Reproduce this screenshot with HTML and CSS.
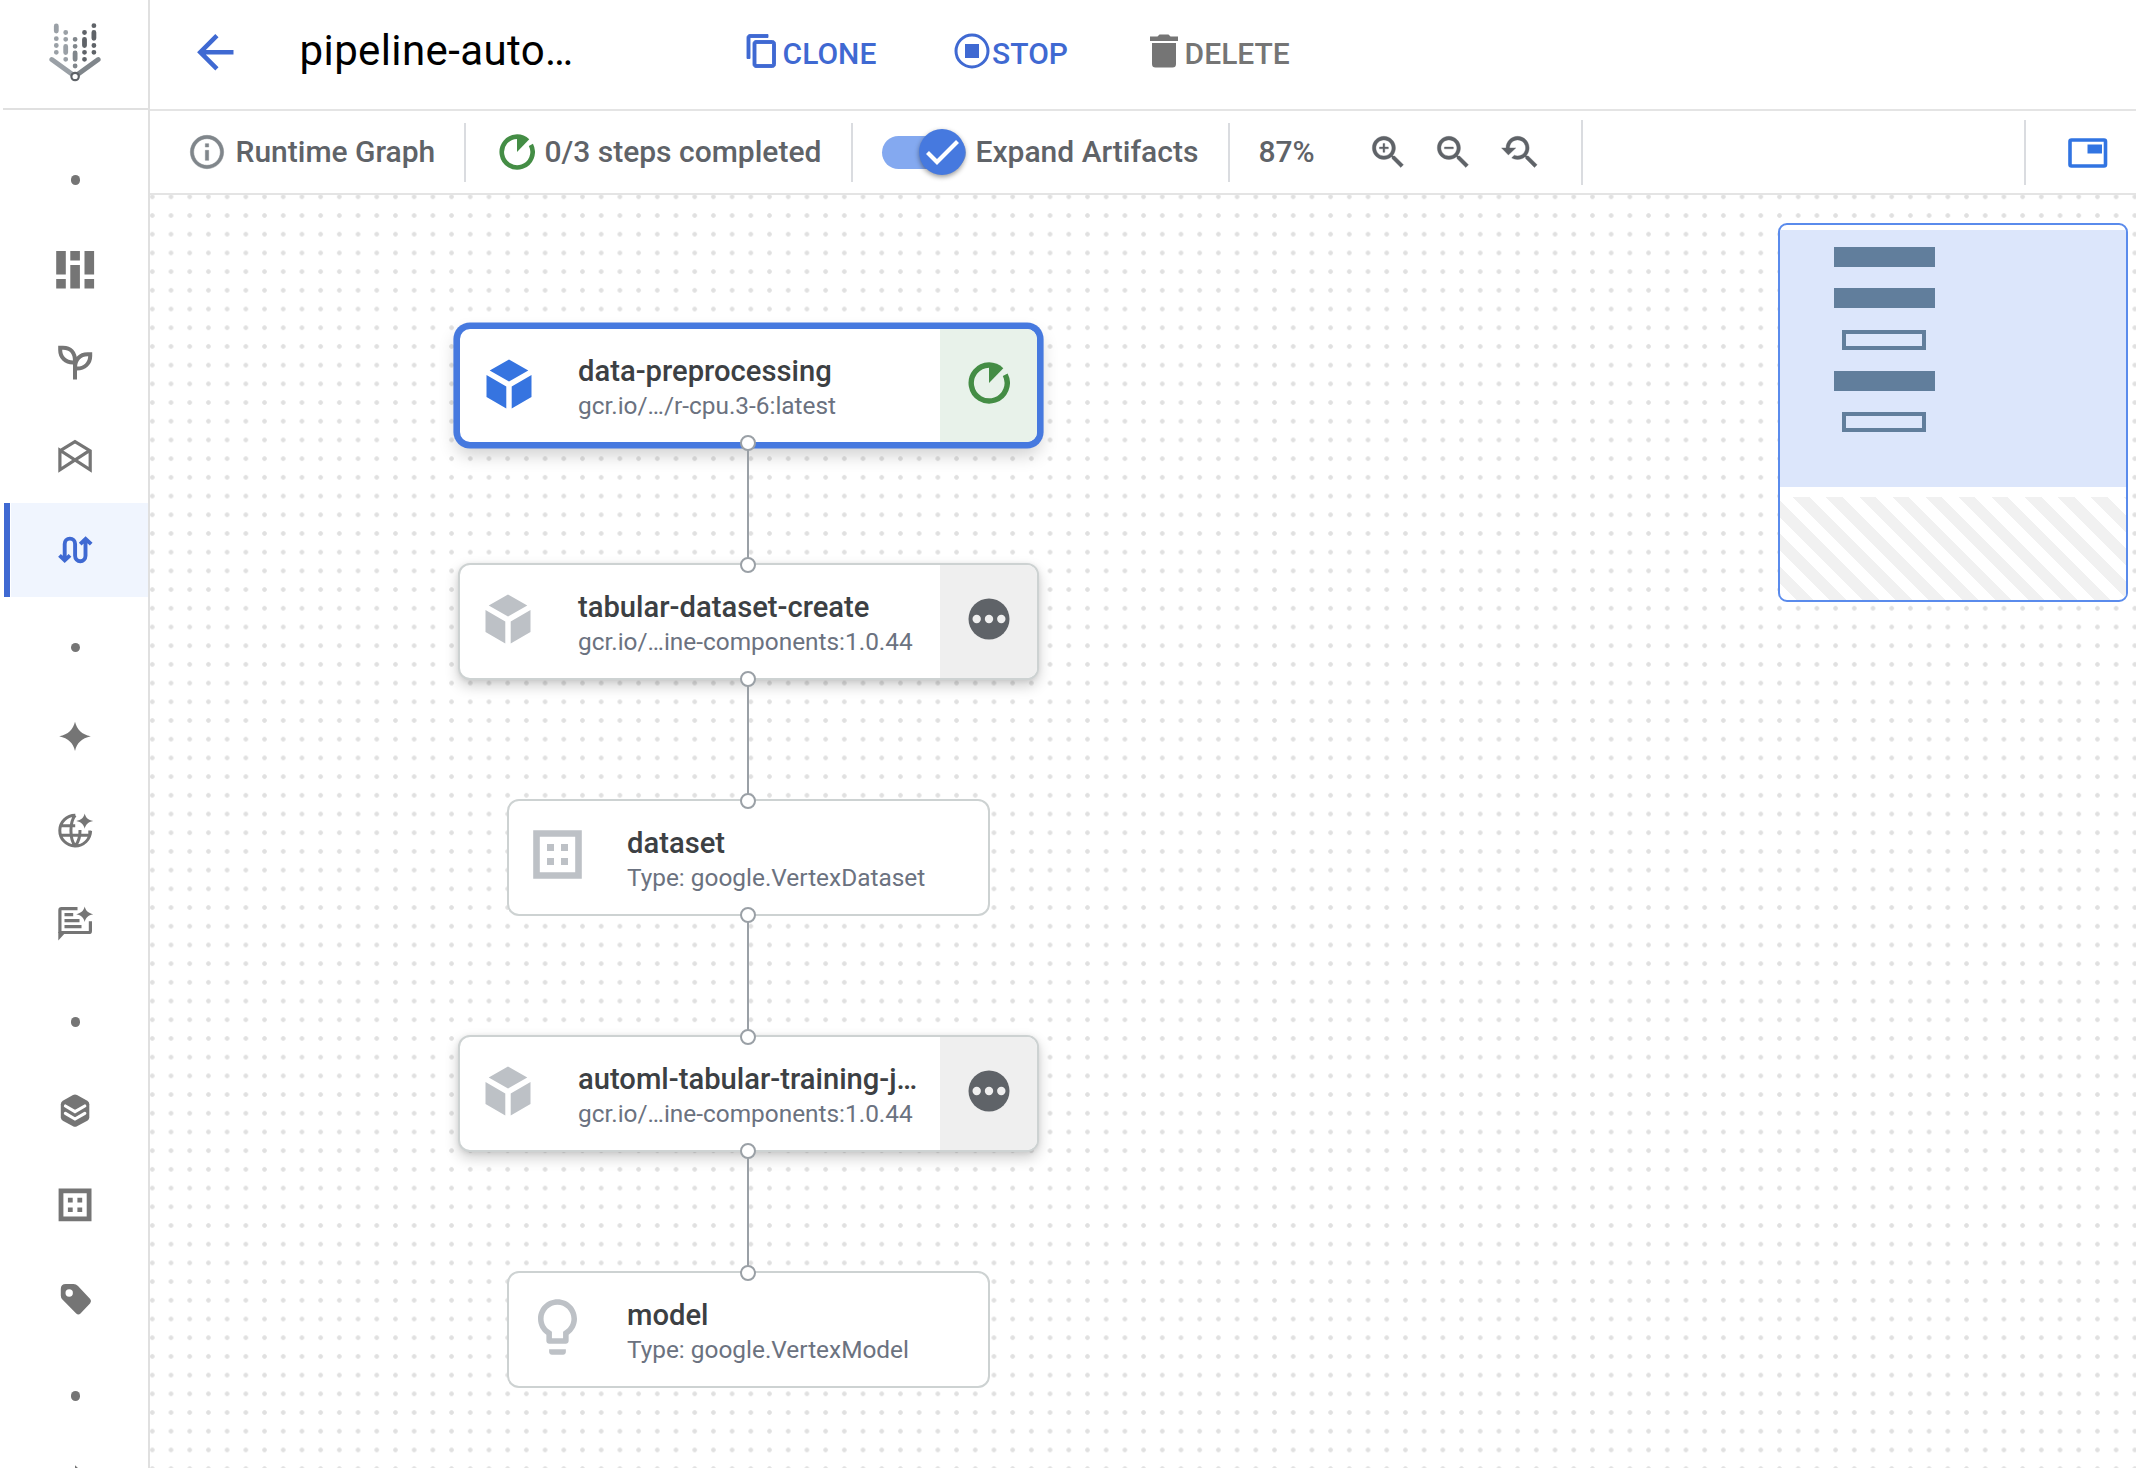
FILE: index.html
```html
<!DOCTYPE html>
<html lang="en">
<head>
<meta charset="utf-8">
<title>pipeline-auto…</title>
<link rel="stylesheet" href="styles.css">
</head>
<body>
<svg class="defs" width="0" height="0" aria-hidden="true">
  <symbol id="progress" viewBox="0 0 42 42"><path d="M21 21V.3A20.7 20.7 0 0 1 35.3 6.2Z" fill="currentColor"/><path d="M37.2 12.7A18 18 0 1 1 21 3" fill="none" stroke="currentColor" stroke-width="5.4"/></symbol>
  <symbol id="cube" viewBox="0 0 46 50"><path d="M23 .5 42.3 11.6 23 22.6 3.7 11.6ZM.5 16 20.3 27.5V49.5L.5 38ZM45.500 16V38L25.700 49.500V27.500Z" fill="currentColor"/></symbol>
  <symbol id="more" viewBox="0 0 42 42"><circle cx="21" cy="21" r="20.500" fill="#5f6368"/><g fill="#efefef"><circle cx="8.700" cy="21" r="4.200"/><circle cx="21" cy="21" r="4.200"/><circle cx="33.300" cy="21" r="4.200"/></g></symbol>
</svg>
<div class="app">
  <aside class="sidebar">
    <div class="logo">
      <svg width="52" height="64" viewBox="49 20 52 64" fill="none" stroke-linecap="round" stroke-width="4.800">
        <path d="M51.800 59.500 72.500 74.500" stroke="#9aa0a6"/>
        <path d="M98.200 59.500 77.500 74.500" stroke="#80868b"/>
        <path d="M56.300 26V31M56.300 38.700h.01M56.300 45.500h.01M56.300 52.300h.01M65.700 32.500h.01M65.700 39.300h.01M65.700 46.500V52.500M65.700 59.300h.01" stroke="#9aa0a6"/>
        <path d="M75.100 39.300h.01M75.100 46.300h.01M75.100 53V59.300M75.100 66h.01" stroke="#80868b"/>
        <path d="M84.500 32.500h.01M84.500 39.300V45.500M84.500 52.300h.01M84.500 59.300h.01M93.900 25.700h.01M93.900 32.500V38.300M93.900 45.500h.01M93.900 52.300h.01" stroke="#5f6368"/>
        <circle cx="75.100" cy="76.500" r="3.700" stroke="#5f6368" stroke-width="2.200" fill="#fff"/>
      </svg>
    </div>
    <nav class="nav">
      <div class="nav-item"><i class="dot"></i></div>
      <div class="nav-item"><svg viewBox="0 0 40 40" fill="currentColor"><path d="M1.200 1h9.600v23.500h-9.600zM1.200 29h9.600v9.500h-9.600zM15.300 1h9.600v9.500h-9.600zM15.300 15h9.600v23.500h-9.600zM29.500 1h9.600v23.500h-9.600zM29.500 29h9.600v9.500h-9.600z"/></svg></div>
      <div class="nav-item"><svg viewBox="0 0 40 40" fill="none" stroke="currentColor" stroke-width="4"><path d="M20 36.600V18C20 9.500 15.500 4.700 8 4.700H5.200V7C5.200 14.500 10.500 19.500 18 19.500H20M20 25C20 16.500 25 11.300 32.500 11.300H35.200V13C35.200 20.500 29.500 25.600 22 25.600H20"/></svg></div>
      <div class="nav-item"><svg viewBox="0 0 40 40" fill="none" stroke="currentColor" stroke-width="3.200"><path d="M4.900 13.800 20 4.600 35.200 13.800V32.800L4.900 13.200V32.800L35.200 13.200"/></svg></div>
      <div class="nav-item active"><svg viewBox="0 0 40 40" fill="none" stroke="currentColor" stroke-width="3.900"><path d="M9.700 30V14a5.200 5.400 0 0 1 10.400 0V25.800a5.200 5.400 0 0 0 10.400 0V9M4.500 25.300 9.700 30.400 15 25.300M25.200 14.200 30.600 8.900 36.200 14.200"/></svg></div>
      <div class="nav-item"><i class="dot"></i></div>
      <div class="nav-item"><svg viewBox="0 0 40 40" fill="currentColor"><path d="M20 4.800C22 12.500 26.500 17.500 35.800 19.300 26.500 21.500 22 26 20 34 18 26 13.500 21.500 4.200 19.300 13.500 17.500 18 12.500 20 4.800Z"/></svg></div>
      <div class="nav-item"><svg viewBox="0 0 40 40" fill="none" stroke="currentColor" stroke-width="3"><path d="M20.300 4.200A15.400 15.400 0 1 0 35.600 20M5 14.700H20.200M5 24.300H35M20.200 4.200C14.500 11 14.500 28 20.200 35M25 19C25.200 26 23.500 31 20.200 35M34.800 19.500V24.300"/><path d="M29.700 2.400C30.700 6.500 33 9 38.200 9.900 33 11 30.700 13.500 29.700 17.800 28.700 13.500 26.400 11 21.200 9.900 26.400 9 28.700 6.500 29.700 2.400Z" fill="currentColor" stroke="none"/></svg></div>
      <div class="nav-item"><svg viewBox="0 0 40 40" fill="none" stroke="currentColor" stroke-width="3.200"><path d="M22.500 4.700H6.500Q4.900 4.700 4.900 6.300V29M4.900 28.500H33.800Q35.400 28.500 35.400 26.900V17.300M9.500 10.700H18.200M9.500 16.600H24.500M9.500 22.600H26.500"/><path d="M3.300 28H11L3.300 36.500ZM29.700 2.600C30.700 6.700 33 9.200 38.200 10.300 33 11.400 30.700 13.900 29.700 18 28.700 13.900 26.400 11.400 21.200 10.300 26.400 9.200 28.700 6.700 29.700 2.600Z" fill="currentColor" stroke="none"/></svg></div>
      <div class="nav-item"><i class="dot"></i></div>
      <div class="nav-item"><svg viewBox="0 0 40 40"><path d="M18 4Q20 2.900 22 4L32.300 9.800Q34.300 11 34.300 13.200V26.500Q34.300 28.500 32.300 29.700L22 35.300Q20 36.300 18 35.300L7.800 29.700Q5.800 28.500 5.800 26.500V13.200Q5.800 11 7.800 9.800Z" fill="currentColor"/><path d="M10.400 15 20 20.700 29.800 15M10.400 22.300 20 28 29.800 22.300" fill="none" stroke="#fff" stroke-width="3.100" stroke-linecap="round"/></svg></div>
      <div class="nav-item"><svg viewBox="0 0 40 40"><path d="M6 5.900H34.100V33.800H6Z" fill="none" stroke="currentColor" stroke-width="4.800"/><path d="M12.900 12.800h4.800v4.700h-4.800zM22.400 12.800h4.800v4.700h-4.800zM12.900 22.400h4.800v4.700h-4.800zM22.400 22.400h4.800v4.700h-4.800z" fill="currentColor"/></svg></div>
      <div class="nav-item"><svg viewBox="0 0 40 40"><path d="M5.800 10Q5.800 5 10.800 5H18.500Q21 5 23 7L35.200 20Q37 22.300 35.200 24.300L25.500 34.500Q23.400 36.500 21.200 34.500L7.400 20.500Q5.800 19 5.800 16.500Z" fill="currentColor"/><circle cx="14.200" cy="14" r="3.700" fill="#fff"/></svg></div>
      <div class="nav-item"><i class="dot"></i></div>
      <div class="nav-item"><svg viewBox="0 0 40 40" fill="currentColor"><path d="M20-.8 23.500 2.500V5H20Z"/></svg></div>
    </nav>
  </aside>
  <main class="main">
    <header class="header">
      <svg class="back" viewBox="0 0 24 24" fill="currentColor"><path d="M20 11H7.830l5.590-5.590L12 4l-8 8 8 8 1.410-1.410L7.830 13H20v-2z"/></svg>
      <h1 class="title">pipeline-auto…</h1>
      <div class="action clone"><svg width="36" height="36" viewBox="0 0 24 24" fill="currentColor" stroke="currentColor" stroke-width=".6"><path d="M16 1H4c-1.100 0-2 .9-2 2v14h2V3h12V1zm3 4H8c-1.100 0-2 .9-2 2v14c0 1.100.9 2 2 2h11c1.100 0 2-.9 2-2V7c0-1.100-.9-2-2-2zm0 16H8V7h11v14z"/></svg><span>CLONE</span></div>
      <div class="action stop"><svg width="36" height="36" viewBox="0 0 36 36"><circle cx="18" cy="18" r="16" fill="none" stroke="currentColor" stroke-width="3"/><path d="M11 11h14v14H11z" fill="currentColor"/></svg><span>STOP</span></div>
      <div class="action delete"><svg width="30" height="36" viewBox="0 0 30 36" fill="currentColor"><path d="M1 3.500H8.500L10.500 1.500H19.500L21.500 3.500H29V8H1ZM3 10H27V31Q27 34.500 23.500 34.500H6.500Q3 34.500 3 31Z"/></svg><span>DELETE</span></div>
    </header>
    <div class="toolbar">
      <div class="tool runtime"><svg width="40" height="40" viewBox="0 0 24 24" fill="#80868b" stroke="#80868b" stroke-width=".3"><path d="M11 7h2v2h-2zm0 4h2v6h-2zm1-9C6.480 2 2 6.480 2 12s4.480 10 10 10 10-4.480 10-10S17.520 2 12 2zm0 18c-4.410 0-8-3.590-8-8s3.590-8 8-8 8 3.590 8 8-3.590 8-8 8z"/></svg><span>Runtime Graph</span></div>
      <i class="rule"></i>
      <div class="tool steps"><svg class="green" width="36" height="36"><use href="#progress"/></svg><span>0/3 steps completed</span></div>
      <i class="rule"></i>
      <div class="tool expand"><div class="switch"><div class="thumb"><svg width="46" height="46" viewBox="0 0 46 46" fill="none" stroke="#fff" stroke-width="4.200"><path d="M8.500 23.500 18 33 38.500 12.500"/></svg></div></div><span>Expand Artifacts</span></div>
      <i class="rule"></i>
      <div class="tool zoom"><span>87%</span>
        <svg viewBox="0 0 24 24" fill="currentColor" stroke="currentColor" stroke-width=".2"><path d="M15.500 14h-.79l-.28-.27C15.410 12.590 16 11.110 16 9.500 16 5.910 13.090 3 9.500 3S3 5.910 3 9.500 5.910 16 9.500 16c1.610 0 3.090-.59 4.230-1.570l.27.28v.79l5 4.990L20.490 19l-4.990-5zm-6 0C7.010 14 5 11.990 5 9.500S7.010 5 9.500 5 14 7.010 14 9.500 11.990 14 9.500 14zM12 10h-2v2H9v-2H7V9h2V7h1v2h2v1z"/></svg>
        <svg viewBox="0 0 24 24" fill="currentColor" stroke="currentColor" stroke-width=".2"><path d="M15.500 14h-.79l-.28-.27C15.410 12.590 16 11.110 16 9.500 16 5.910 13.090 3 9.500 3S3 5.910 3 9.500 5.910 16 9.500 16c1.610 0 3.090-.59 4.230-1.570l.27.28v.79l5 4.990L20.490 19l-4.990-5zm-6 0C7.010 14 5 11.990 5 9.500S7.010 5 9.500 5 14 7.010 14 9.500 11.990 14 9.500 14zM7 9h5v1H7z"/></svg>
        <svg viewBox="0 0 24 24" fill="currentColor" stroke="currentColor" stroke-width=".2"><path d="M17.010 14h-.8l-.27-.27c.98-1.140 1.570-2.610 1.570-4.230 0-3.590-2.910-6.500-6.500-6.500s-6.500 3-6.500 6.500H2l3.840 4 4.160-4H6.510C6.510 7 8.530 5 11.010 5s4.500 2.010 4.500 4.500c0 2.480-2.020 4.500-4.500 4.500-.65 0-1.260-.14-1.820-.38L7.710 15.100c.97.57 2.090.9 3.300.9 1.610 0 3.080-.59 4.220-1.570l.27.27v.79l5.010 4.990L22 19l-4.990-5z"/></svg>
      </div>
      <i class="rule tall"></i>
      <div class="spacer"></div>
      <i class="rule tall"></i>
      <div class="tool map-toggle"><svg width="40" height="30" viewBox="0 0 40 30"><rect x="2" y="2" width="35.500" height="26" rx="1.500" fill="none" stroke="currentColor" stroke-width="3.600"/><path d="M19.500 6.500H34V15.500H19.500Z" fill="currentColor"/></svg></div>
    </div>
    <section class="canvas">
      <div class="graph">
        <div class="node task selected"><svg class="cube"><use href="#cube"/></svg><div class="label"><b>data-preprocessing</b><span>gcr.io/…/r-cpu.3-6:latest</span></div><div class="status"><svg width="42" height="42"><use href="#progress"/></svg></div></div>
        <div class="edge"></div>
        <div class="node task"><svg class="cube"><use href="#cube"/></svg><div class="label"><b>tabular-dataset-create</b><span>gcr.io/…ine-components:1.0.44</span></div><div class="status"><svg width="42" height="42"><use href="#more"/></svg></div></div>
        <div class="edge"></div>
        <div class="node artifact"><svg class="data" viewBox="0 0 49 49"><path d="M3.500 3.500H45.500V45.500H3.500Z" fill="none" stroke="currentColor" stroke-width="6.600"/><path d="M14 14h7v7h-7zM28 14h7v7h-7zM14 28h7v7h-7zM28 28h7v7h-7z" fill="currentColor"/></svg><div class="label"><b>dataset</b><span>Type: google.VertexDataset</span></div></div>
        <div class="edge"></div>
        <div class="node task"><svg class="cube"><use href="#cube"/></svg><div class="label"><b>automl-tabular-training-j…</b><span>gcr.io/…ine-components:1.0.44</span></div><div class="status"><svg width="42" height="42"><use href="#more"/></svg></div></div>
        <div class="edge"></div>
        <div class="node artifact"><svg class="bulb" viewBox="5 2 14 20" fill="currentColor"><path d="M9 21c0 .55.45 1 1 1h4c.55 0 1-.45 1-1v-1H9v1zm3-19C8.140 2 5 5.140 5 9c0 2.380 1.190 4.470 3 5.740V17c0 .55.45 1 1 1h6c.55 0 1-.45 1-1v-2.260c1.810-1.270 3-3.360 3-5.740 0-3.860-3.140-7-7-7zm2.850 11.100l-.85.6V16h-4v-2.300l-.85-.6C7.800 12.160 7 10.630 7 9c0-2.760 2.240-5 5-5s5 2.240 5 5c0 1.630-.8 3.160-2.150 4.100z"/></svg><div class="label"><b>model</b><span>Type: google.VertexModel</span></div></div>
      </div>
      <div class="minimap">
        <div class="viewport"><i class="bar"></i><i class="bar"></i><i class="bar hollow"></i><i class="bar"></i><i class="bar hollow"></i></div>
        <div class="hatch"></div>
      </div>
    </section>
  </main>
</div>
</body>
</html>
```
FILE: styles.css
```css
*, *::before, *::after { box-sizing: border-box; }
body { margin: 0; background: #fff; font-family: Roboto, "Liberation Sans", sans-serif; color: #5f6368; }
svg { display: block; flex: none; }
.defs { position: absolute; }
.app { display: flex; width: 2136px; height: 1468px; overflow: hidden; }

.sidebar { flex: none; width: 150px; height: 1468px; padding-left: 3px; border-right: 2px solid #e0e0e0; overflow: hidden; }
.logo { height: 110px; padding: 20px 0 0 46px; border-bottom: 2px solid #e0e0e0; }
.nav { padding-top: 19.2px; color: #757575; }
.nav-item { height: 93.55px; display: flex; align-items: center; padding-left: 52px; }
.nav-item svg { width: 40px; height: 40px; overflow: visible; }
.dot { width: 9.6px; height: 9.6px; margin: 8px 0 0 15.5px; border-radius: 50%; background: #757575; }
.active { margin-left: 1px; padding-left: 44px; border-left: 6px solid #3f69d2; background: linear-gradient(#f0f5fe, #f0f5fe) 1px 0 no-repeat; color: #3f69d2; }
.active svg { margin-left: 1px; }

.main { flex: 1; min-width: 0; display: flex; flex-direction: column; }
.header { height: 111px; flex: none; display: flex; align-items: flex-start; border-bottom: 2px solid #e4e4e4; }
.back { width: 54.6px; height: 54.6px; margin: 24.7px 0 0 37.5px; color: #3f69d2; }
.title { margin: 26px 0 0 57.500px; width: 441px; font-size: 42px; line-height: 50px; font-weight: 400; letter-spacing: .38px; color: #000; white-space: nowrap; }
.action { display: flex; height: 36px; margin-top: 32.5px; font-size: 30px; line-height: 42px; font-weight: 500; color: #3f69d2; white-space: nowrap; }
.clone { width: 210.500px; margin-left: 3px; }
.clone span { margin-left: 3px; }
.stop { width: 194.500px; }
.stop span { margin-left: 2px; }
.delete { color: #757575; }
.delete span { margin-left: 6px; }

.toolbar { height: 84px; flex: none; display: flex; align-items: center; border-bottom: 2px solid #e4e4e4; font-size: 30px; line-height: 36px; font-weight: 500; white-space: nowrap; }
.tool { flex: none; display: flex; align-items: center; }
.rule { flex: none; width: 2px; height: 59px; background: #dadce0; }
.rule.tall { height: 65px; }
.runtime { width: 314px; padding-left: 36.500px; gap: 9px; }
.steps { width: 385px; padding-left: 32.500px; gap: 10px; }
.green { color: #448d45; }
.expand { width: 375px; padding-left: 29px; }
.switch { width: 84px; height: 33px; margin-right: 9.500px; border-radius: 17px; background: #84a9f0; padding-left: 37px; }
.thumb { width: 46px; height: 46px; margin-top: -6.500px; border-radius: 50%; background: #4679df; box-shadow: 0 2px 5px rgba(0,0,0,.4); }
.zoom { width: 351px; padding-left: 28.500px; }
.zoom svg { width: 42.700px; height: 42.700px; margin-right: 23px; margin-top: 1px; }
.zoom span { width: 108px; }
.spacer { flex: 1; }
.map-toggle { width: 110px; padding: 2px 0 0 42px; color: #3174e2; }

.canvas { flex: 1; position: relative; min-height: 0; overflow: hidden; background: radial-gradient(circle at center, #e0e0e0 1.900px, rgba(224,224,224,0) 2.700px) -7.060px -7.560px / 18.717px 18.717px; }
.graph { width: 581px; margin: 132px 0 0 308px; display: flex; flex-direction: column; align-items: center; }
.node { flex: none; height: 117px; width: 581px; display: flex; border: 2px solid #cdd2d2; border-radius: 12px; background: #fff; color: #bdc1c6; }
.task { overflow: hidden; box-shadow: 0 6px 14px rgba(0,0,0,.19), 0 1px 5px rgba(0,0,0,.08); }
.artifact { width: 483px; }
.selected { box-shadow: 0 0 0 4.600px #4679df, 0 9px 18px 2px rgba(0,0,0,.19); color: #3674e0; border-color: #4679df; }
.cube { width: 46px; height: 50px; margin: 29px 47px 0 25px; }
.selected .cube { margin: 30px 46px 0 26px; }
.data { width: 49px; height: 49px; margin: 28.500px 45px 0 24px; }
.bulb { width: 39px; height: 56px; margin: 25.500px 50px 0 29px; }
.label { flex: 1; min-width: 0; display: flex; flex-direction: column; padding-top: 24px; white-space: nowrap; }
.label b { font-size: 29.200px; line-height: 36px; font-weight: 500; color: #3c4043; }
.label span { font-size: 24.400px; line-height: 34px; color: #6b7280; }
.status { width: 97px; padding-bottom: 5px; display: flex; align-items: center; justify-content: center; background: #efefef; }
.selected .status { background: #e8f2ea; color: #448d45; }

.edge { flex: none; position: relative; width: 2px; height: 119px; margin-right: 1px; background: #9aa0a6; z-index: 1; }
.edge::before, .edge::after { content: ""; position: absolute; left: -7px; width: 16px; height: 16px; border: 2px solid #9aa0a6; border-radius: 50%; background: #fff; }
.edge::before { top: -9px; }
.edge::after { bottom: -10px; }

.minimap { position: absolute; left: 1628px; top: 28px; width: 350px; height: 379px; padding: 5px 0 0; border: 2px solid #5a8bec; border-radius: 9px; background: #fff; overflow: hidden; }
.viewport { height: 257px; padding: 17px 0 0 53.500px; display: flex; flex-direction: column; gap: 21.100px; background: #dce6fb; }
.bar { width: 101.500px; height: 20.200px; background: #617e9c; }
.hollow { width: 84px; margin-left: 8.700px; background: none; border: 4px solid #617e9c; }
.hatch { height: 103px; margin-top: 10px; background: repeating-linear-gradient(45deg, transparent 0 11.700px, #f1f1f1 11.700px 23.400px); }
```
